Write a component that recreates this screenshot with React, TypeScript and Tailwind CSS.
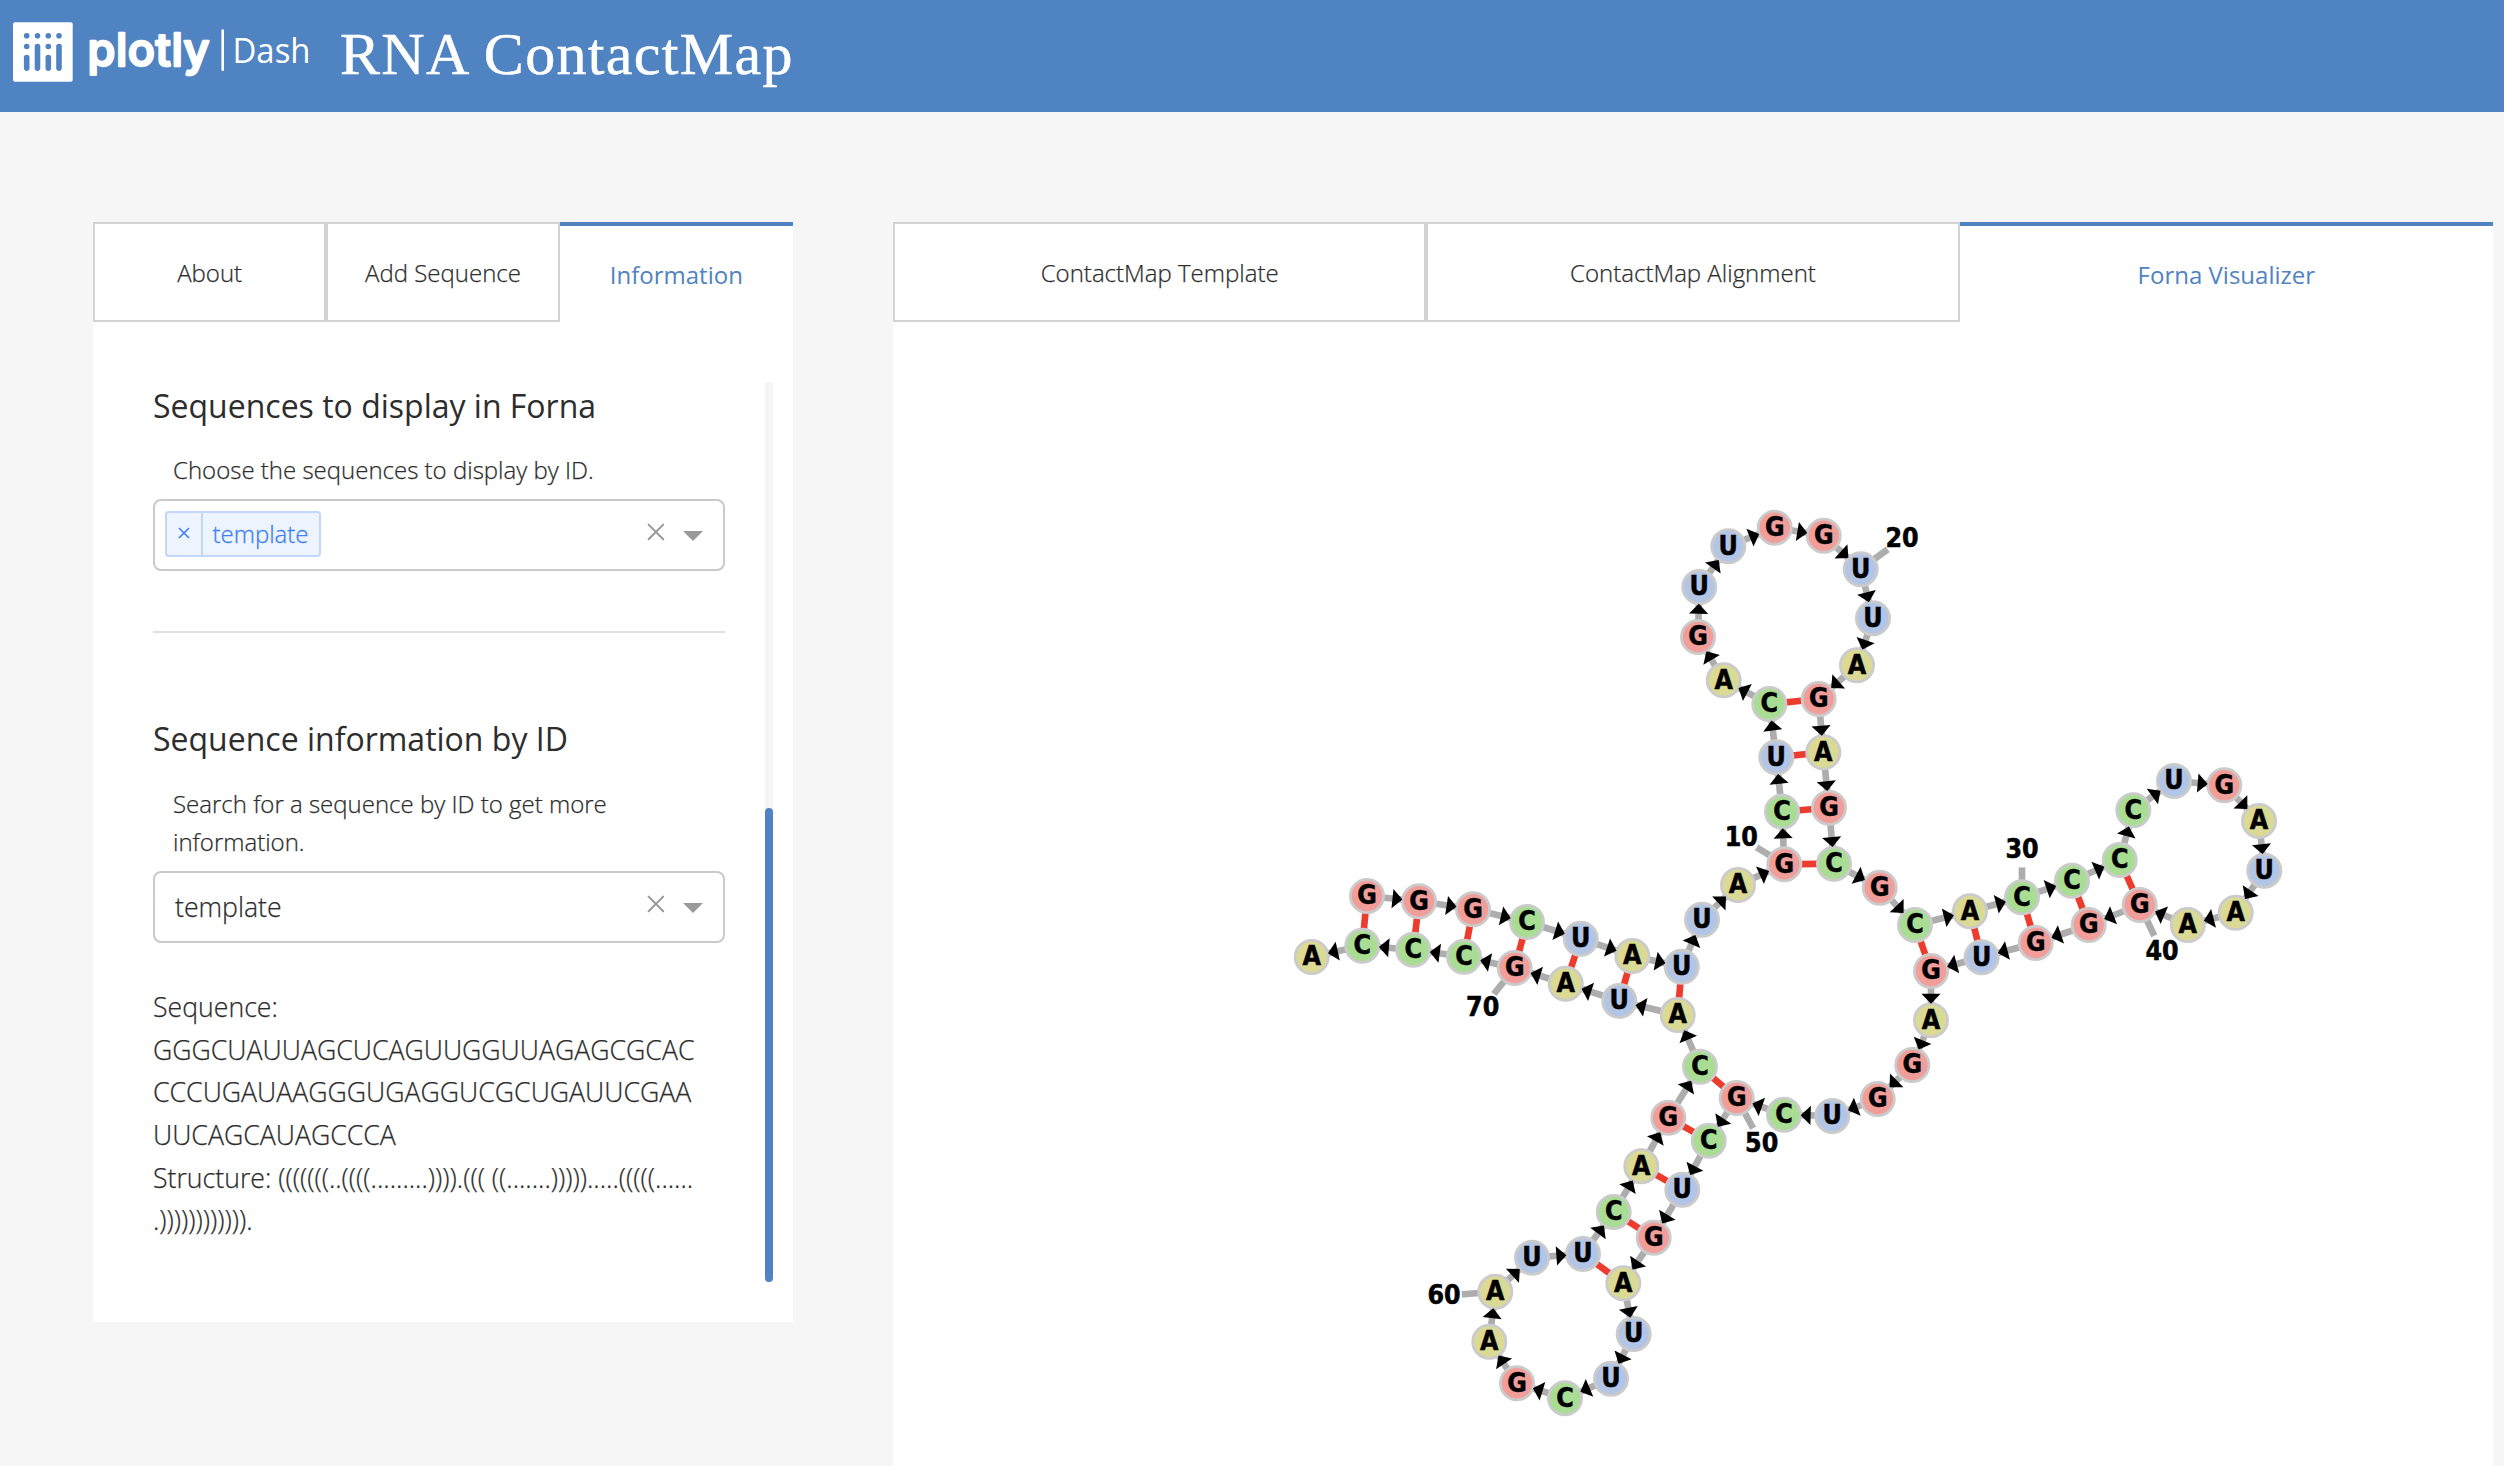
import React from "react";

type Base = "G" | "C" | "A" | "U";
type Nucleotide = [Base, number, number];

const FILL: Record<Base, string> = {
  G: "fill-[#f19d99]",
  C: "fill-[#a9dd94]",
  A: "fill-[#dbda95]",
  U: "fill-[#b2c5e6]",
};

const NODES: Nucleotide[] = [
  ["G", 1367, 896], ["G", 1419, 901.3], ["G", 1473, 909.3], ["C", 1527, 922], ["U", 1580.7, 938.7],
  ["A", 1632.3, 956], ["U", 1681.7, 966.7], ["U", 1702, 919.7], ["A", 1738, 885], ["G", 1784.3, 864.3],
  ["C", 1782, 811.7], ["U", 1776.3, 757.3], ["C", 1769.3, 704], ["A", 1723.7, 680.3], ["G", 1698, 637],
  ["U", 1699.3, 587], ["U", 1728.3, 546.3], ["G", 1774.7, 527.7], ["G", 1823.7, 535.7], ["U", 1860.7, 569.3],
  ["U", 1873, 618.3], ["A", 1857, 665.3], ["G", 1818.7, 699], ["A", 1823.3, 752.3], ["G", 1829, 807.7],
  ["C", 1834, 863.7], ["G", 1879.7, 887.7], ["C", 1915, 925], ["A", 1970, 911.3], ["C", 2022, 897.3],
  ["C", 2072, 880.7], ["C", 2119.7, 860], ["C", 2133.3, 810.3], ["U", 2174, 781], ["G", 2224.3, 785.3],
  ["A", 2259, 821], ["U", 2264.3, 870.7], ["A", 2235.7, 912.7], ["A", 2187.7, 925], ["G", 2139.7, 905],
  ["G", 2088.7, 925], ["G", 2035.7, 943], ["U", 1981.7, 957.3], ["G", 1931, 971], ["A", 1931, 1020.3],
  ["G", 1912.3, 1065], ["G", 1877.7, 1099], ["U", 1832.3, 1116], ["C", 1784, 1114.7], ["G", 1736.7, 1098],
  ["C", 1708.7, 1140.7], ["U", 1682.3, 1189.7], ["G", 1653.7, 1237.7], ["A", 1623.3, 1283.3], ["U", 1633.7, 1334],
  ["U", 1611, 1378.7], ["C", 1565, 1398.3], ["G", 1517, 1383.3], ["A", 1489.3, 1341.7], ["A", 1495.3, 1291.7],
  ["U", 1532, 1257.7], ["U", 1583, 1254], ["C", 1613.7, 1212], ["A", 1641.3, 1166.3], ["G", 1668.3, 1117.7],
  ["C", 1700, 1066.7], ["A", 1677.7, 1015], ["U", 1619.3, 1001], ["A", 1565.7, 983.7], ["G", 1514.7, 968],
  ["C", 1464, 956.7], ["C", 1413.3, 949.7], ["C", 1362.3, 945.7], ["A", 1311.7, 957],
];

const PAIRS: [number, number][] = [
  [1, 73], [2, 72], [3, 71], [4, 70], [5, 69], [6, 68], [7, 67],
  [10, 26], [11, 25], [12, 24], [13, 23],
  [28, 44], [29, 43], [30, 42], [31, 41], [32, 40],
  [50, 66], [51, 65], [52, 64], [53, 63], [54, 62],
];

const LABELS: [number, number, number][] = [
  [10, 1741.3, 838], [20, 1902, 538.7], [30, 2022, 849.5], [40, 2162, 952],
  [50, 1761.7, 1144], [60, 1444, 1295.7], [70, 1482.7, 1008],
];

const bonds = NODES.slice(1).map((to, i) => {
  const from = NODES[i];
  const dx = to[1] - from[1];
  const dy = to[2] - from[2];
  const len = Math.hypot(dx, dy);
  const ux = dx / len;
  const uy = dy / len;
  const tipX = to[1] - ux * 16.67;
  const tipY = to[2] - uy * 16.67;
  const baseX = tipX - ux * 10;
  const baseY = tipY - uy * 10;
  return {
    from,
    to,
    arrow: `${tipX},${tipY} ${baseX - uy * 9.6},${baseY + ux * 9.6} ${baseX + uy * 9.6},${baseY - ux * 9.6}`,
  };
});

function RnaGraph() {
  return (
    <svg viewBox="893 322 1600 1144" className="block h-[1144px] w-[1600px]">
      <g className="stroke-[#adadad]" strokeWidth="6.67">
        {bonds.map(({ from, to }, i) => (
          <line key={i} x1={from[1]} y1={from[2]} x2={to[1]} y2={to[2]} />
        ))}
        {LABELS.map(([n, x, y]) => (
          <line key={n} x1={NODES[n - 1][1]} y1={NODES[n - 1][2]} x2={x} y2={y} />
        ))}
      </g>
      <g className="stroke-[#ed3b2d]" strokeWidth="6.67">
        {PAIRS.map(([a, b]) => (
          <line key={a} x1={NODES[a - 1][1]} y1={NODES[a - 1][2]} x2={NODES[b - 1][1]} y2={NODES[b - 1][2]} />
        ))}
      </g>
      {NODES.map(([base, x, y], i) => (
        <circle key={i} cx={x} cy={y} r="16.6" strokeWidth="2.8" className={`stroke-[#cbcbcb] ${FILL[base]}`} />
      ))}
      {LABELS.map(([n, x, y]) => (
        <circle key={n} cx={x} cy={y} r="18" className="fill-white" />
      ))}
      {bonds.map(({ arrow }, i) => (
        <polygon key={i} points={arrow} className="fill-black" />
      ))}
      <g
        textAnchor="middle"
        strokeWidth="0.5"
        className="fill-black stroke-black font-['DejaVu_Sans_Condensed','DejaVu_Sans',sans-serif] text-[26.5px] font-bold"
      >
        {NODES.map(([base, x, y], i) => (
          <text key={i} x={x} y={y + 8.4}>{base}</text>
        ))}
        {LABELS.map(([n, x, y]) => (
          <text key={n} x={x} y={y + 8.4}>{n}</text>
        ))}
      </g>
    </svg>
  );
}

function Logo() {
  return (
    <svg viewBox="0 0 320 112" className="block h-[112px] w-[320px] shrink-0">
      <rect x="13" y="22.3" width="59.7" height="59.4" rx="2" className="fill-white" />
      <g className="fill-[#5083c1]">
        {[26.7, 37.5, 48.3, 59].map((x, i) => (
          <g key={x}>
            <circle cx={x} cy="35.7" r="2.8" />
            {i % 2 === 0 && <circle cx={x} cy="46.5" r="2.8" />}
            <rect x={x - 2.8} y={i % 2 === 0 ? 54.7 : 43.7} width="5.6" height={i % 2 === 0 ? 16.2 : 27.2} rx="2.8" />
          </g>
        ))}
      </g>
      <text
        x="87.5" y="65.8" textLength="122" lengthAdjust="spacing"
        strokeWidth="2.4" strokeLinejoin="round"
        className="fill-white stroke-white font-['Inter',sans-serif] text-[45px] font-medium"
      >
        plotly
      </text>
      <rect x="221.4" y="29.3" width="2.6" height="41.7" rx="1.3" className="fill-white" />
      <text
        x="232.5" y="63.3" textLength="78" lengthAdjust="spacingAndGlyphs"
        className="fill-white font-['Open_Sans',sans-serif] text-[34.5px]"
      >
        Dash
      </text>
    </svg>
  );
}

function Tabs({ items }: { items: string[] }) {
  return (
    <div className="grid h-[100px] grid-cols-3 text-[24px]">
      {items.map((label, i) =>
        i === items.length - 1 ? (
          <div key={label} className="flex items-center justify-center border-t-4 border-[#5083c1] pt-[2px] text-[#5083c1]">
            {label}
          </div>
        ) : (
          <div
            key={label}
            className="flex items-center justify-center border-2 border-[#d3d3d3] pt-[2px] font-light [-webkit-text-stroke:0.25px]"
          >
            {label}
          </div>
        ),
      )}
    </div>
  );
}

function SelectIcons() {
  return (
    <svg viewBox="0 0 60 20" className="ml-auto mr-[18px] mb-[6px] block h-[20px] w-[60px] fill-none">
      <path d="M3.6 2.6 18.2 17.2M18.2 2.6 3.6 17.2" className="stroke-[#999999]" strokeWidth="2" strokeLinecap="round" />
      <path d="M38 9H58L48 19Z" className="fill-[#999999]" />
    </svg>
  );
}

function Select({ children }: { children: React.ReactNode }) {
  return (
    <div className="flex h-[72px] w-[572px] items-center rounded-lg border-2 border-[#cacaca] bg-white">
      {children}
      <SelectIcons />
    </div>
  );
}

export default function App() {
  return (
    <div className="h-[1466px] w-[2504px] overflow-hidden bg-[#f6f6f6] font-['Open_Sans',sans-serif] text-[#2d2d2d]">
      <header className="flex h-[112px] items-center bg-[#5083c1]">
        <Logo />
        <h1 className="mb-[5px] ml-[20px] font-['Liberation_Serif',serif] text-[60px] leading-[68px] tracking-[1.35px] whitespace-nowrap text-white [-webkit-text-stroke:0.5px]">
          RNA ContactMap
        </h1>
      </header>
      <main className="flex items-start gap-[100px] pt-[110px] pl-[93px]">
        <section className="h-[1100px] w-[700px] shrink-0 bg-white">
          <Tabs items={["About", "Add Sequence", "Information"]} />
          <div className="mt-[60px] flex h-[900px] pl-[60px]">
            <div className="w-[572px]">
              <h2 className="mt-px text-[32px] leading-[45px]">Sequences to display in Forna</h2>
              <p className="mt-[23px] pl-[20px] text-[24px] leading-[38.4px] font-light [-webkit-text-stroke:0.25px]">
                Choose the sequences to display by ID.
              </p>
              <div className="mt-[9.6px]">
                <Select>
                  <div className="mb-[2px] ml-[10px] flex h-[46px] w-[156px] items-stretch rounded border-2 border-[#c2d6fb] bg-[#edf4fe] text-[24px] font-light text-[#3c7ff0] [-webkit-text-stroke:0.3px]">
                    <span className="flex w-[36px] items-center justify-center border-r-2 border-[#c2d6fb] pb-[3px]">
                      <svg viewBox="0 0 12 12" className="h-[12px] w-[12px]">
                        <path d="M1 1 11 11M11 1 1 11" className="stroke-[#3c7ff0]" strokeWidth="1.6" />
                      </svg>
                    </span>
                    <span className="flex flex-1 items-center pb-px pl-[9.5px]">template</span>
                  </div>
                </Select>
              </div>
              <hr className="mt-[60px] border-0 border-t-2 border-[#e1e1e1]" />
              <h2 className="mt-[83px] text-[32px] leading-[45px]">Sequence information by ID</h2>
              <p className="mt-[24px] mb-[9.2px] pl-[20px] text-[24px] leading-[38.4px] font-light [-webkit-text-stroke:0.25px]">
                Search for a sequence by ID to get more
                <br />
                information.
              </p>
              <Select>
                <span className="pl-[20px] text-[26.67px] font-light [-webkit-text-stroke:0.25px]">template</span>
              </Select>
              <div className="mt-[43px] text-[26.67px] leading-[42.67px] font-light whitespace-nowrap [-webkit-text-stroke:0.25px]">
                <p>Sequence:</p>
                <p>GGGCUAUUAGCUCAGUUGGUUAGAGCGCAC</p>
                <p>CCCUGAUAAGGGUGAGGUCGCUGAUUCGAA</p>
                <p>UUCAGCAUAGCCCA</p>
                <p>{"Structure: (((((((..((((.........)))).((( ((.......))))).....(((((......"}</p>
                <p>{".))))))))))))."}</p>
              </div>
            </div>
            <div className="ml-[40px] flex h-[900px] w-[8px] items-end bg-[#f5f5f5]">
              <div className="h-[474px] w-[8px] rounded bg-[#5083c1]" />
            </div>
          </div>
        </section>
        <section className="h-[1244px] w-[1600px] shrink-0 bg-white">
          <Tabs items={["ContactMap Template", "ContactMap Alignment", "Forna Visualizer"]} />
          <RnaGraph />
        </section>
      </main>
    </div>
  );
}
